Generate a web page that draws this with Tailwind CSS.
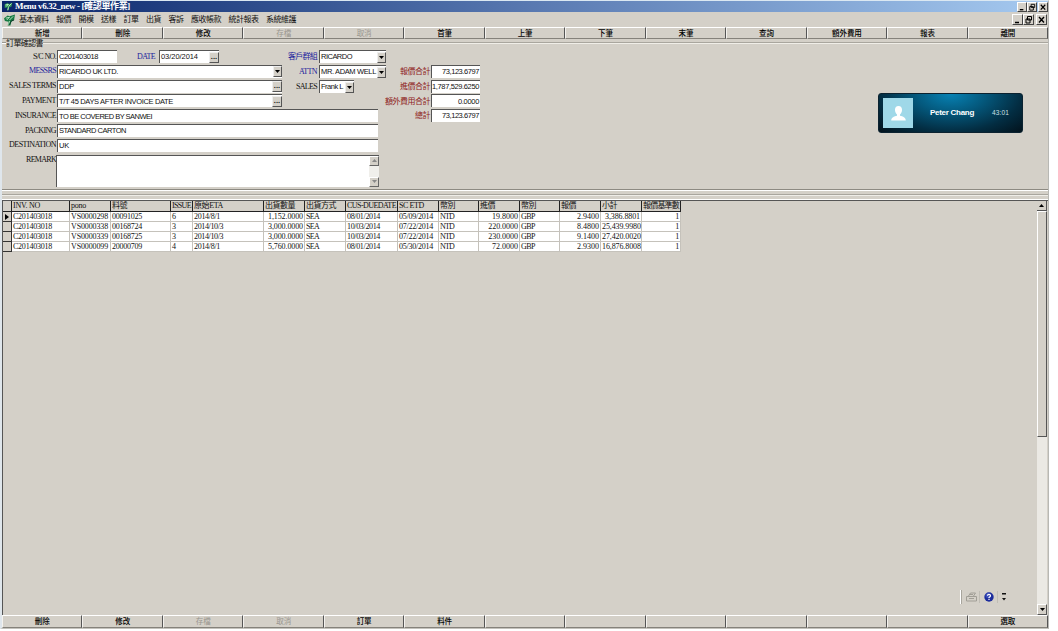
<!DOCTYPE html>
<html lang="zh-Hant">
<head>
<meta charset="utf-8">
<title>Menu v6.32_new</title>
<script src="https://cdn.jsdelivr.net/npm/@tailwindcss/browser@4"></script>
</head>
<body class="h-[631px] w-[1058px] overflow-hidden bg-white whitespace-nowrap text-[#111]">
<div class="flex h-[629px] w-[1049px] flex-col border-t border-r border-b border-l-2 border-t-[#dbe8f2] border-r-[#b8b8b4] border-b-[#c4c2bc] border-l-[#dfe6ec] bg-[#d4d0c8]">
  <header class="flex h-[11px] shrink-0 items-center bg-linear-to-r from-[#0a246a] via-[#5878b0] to-[#a6caf0] pl-[2px] font-['Liberation_Serif','Noto_Sans_CJK_TC',serif] text-[9px] leading-[11px] font-bold text-white">
    <svg class="mr-[2px] h-[9px] w-[9px]" viewBox="0 0 12 12"><path d="M1 3l4-2 1 2 5-2-1 5-3 1-1 4H4l1-4-4 1z" fill="#2f9a54"/><path d="M2 4l4-1-3 3M6 6l4-4M6 7l-1 4" stroke="#dff5df" fill="none"/></svg>
    <span data-w="115">Menu v6.32_new - [確認單作業]</span>
    <div class="ml-auto flex" id="winTop"></div>
  </header>
  <nav class="flex h-[15px] shrink-0 items-center pl-[2px] font-['Noto_Sans_CJK_TC',sans-serif] text-[8px] leading-[14px]">
    <svg class="mr-[4px] h-[12px] w-[11px] shrink-0" viewBox="0 0 12 12"><path d="M0 4l4-3 2 1 6-2-1 6-3 2-1 4H4l1-4-4-1z" fill="#167a43"/><path d="M2 4l4-1-3 3M6 6l4-4M6 7l-1 4" stroke="#c4ecc8" fill="none"/><path d="M6 11l2-4 3-1" stroke="#123a2a" fill="none"/></svg>
    <div class="flex gap-[7.5px] pb-px">
      <span data-w="29.500">基本資料</span><span data-w="15">報價</span><span data-w="15">開模</span><span data-w="15">送樣</span><span data-w="15">訂單</span><span data-w="15">出貨</span><span data-w="15">客訴</span><span data-w="30">應收帳款</span><span data-w="30">統計報表</span><span data-w="30">系統維護</span>
    </div>
    <div class="mr-px ml-auto flex" id="winDoc"></div>
  </nav>
  <div class="flex h-[12px] shrink-0" id="barTop"></div>

  <section class="flex h-[151px] shrink-0 flex-col">
    <div class="flex h-[7px] items-center">
      <i class="h-[2px] w-[4px] border-t border-b border-t-[#9b988f] border-b-white"></i>
      <span class="font-['Noto_Sans_CJK_TC',sans-serif] text-[8px] leading-[8px]" data-w="37">訂單確認書</span>
      <i class="h-[2px] flex-1 border-t border-b border-t-[#a9a69e] border-b-[#f0eee8]"></i>
    </div>
    <div class="flex flex-1 border-b border-[#8d8a82] pt-[3px]">
      <div class="w-[377px] font-['Liberation_Serif',serif] text-[8px]">
        <div class="flex h-[15px] items-center">
          <label class="mr-px w-[54px] text-right"><span data-w="23">S/C NO.</span></label>
          <div class="flex h-[13px] w-[60px] items-center border-t border-l border-[#555] bg-white pl-px font-['Liberation_Sans',sans-serif] text-[7.5px]"><span data-w="39">C201403018</span></div>
          <label class="mr-[4px] ml-auto text-[#22229c]"><span data-w="18">DATE</span></label>
          <div class="mr-[160px] flex h-[13px] w-[60px] items-center border-t border-l border-[#555] bg-white pl-px font-['Liberation_Sans',sans-serif] text-[7.5px]"><span data-w="37">03/20/2014</span><b class="ml-auto h-[11px] w-[10px] border border-t-[#eee] border-r-[#555] border-b-[#555] border-l-[#eee] bg-[#d4d0c8] text-center leading-[7px]">...</b></div>
        </div>
        <div id="leftRows"></div>
        <div class="flex h-[34px] pt-[2px]">
          <label class="w-[54px] text-right leading-[9px]"><span data-w="30">REMARK</span></label>
          <div class="flex h-[32px] flex-1 border-t border-l border-[#555] bg-white">
            <div class="ml-auto flex w-[10px] flex-col justify-between bg-[#f0efeb]">
              <i class="flex h-[10px] items-center justify-center border border-t-white border-r-[#666] border-b-[#666] border-l-white bg-[#d4d0c8]"><svg class="h-[3px] w-[5px]" viewBox="0 0 5 3"><path d="M0 3L2.5 0 5 3z" fill="#888"/></svg></i>
              <i class="flex h-[10px] items-center justify-center border border-t-white border-r-[#666] border-b-[#666] border-l-white bg-[#d4d0c8]"><svg class="h-[3px] w-[5px]" viewBox="0 0 5 3"><path d="M0 0h5L2.5 3z" fill="#888"/></svg></i>
            </div>
          </div>
        </div>
      </div>
      <div class="-ml-[94px] w-[101px] font-['Liberation_Serif','Noto_Sans_CJK_TC',serif] text-[8px]" id="midRows"></div>
      <div class="w-[94px] pt-[15px] font-['Noto_Sans_CJK_TC',sans-serif] text-[8px] text-[#8e1b1b]" id="sumRows"></div>
      <aside class="mt-[44px] ml-[398px] flex h-[40px] w-[145px] items-center rounded-[3px] border border-[#0b2230] bg-[radial-gradient(ellipse_at_50%_0%,#0782b4_0%,#04587c_35%,#032d42_70%,#02121c_100%)] pl-[4px] font-['Liberation_Sans',sans-serif] text-white">
        <div class="flex h-[30px] w-[30px] items-center justify-center bg-[#9fd8e8]"><svg class="h-[17px] w-[17px]" viewBox="0 0 17 17"><path d="M8.5 1C6 1 4.8 2.7 5 5.2c.2 2 1 3.400 2 4.200v1.300C4 11.500 1.500 12 1.200 15.500h14.600C15.500 12 13 11.500 10 10.700V9.400c1-.8 1.800-2.200 2-4.200C12.200 2.700 11 1 8.500 1z" fill="#fff"/></svg></div>
        <b class="ml-[17px] text-[8px]" data-w="44">Peter Chang</b>
        <span class="ml-[18px] text-[6.500px] text-[#cfe0e6]" data-w="17">43:01</span>
      </aside>
    </div>
  </section>

  <div class="h-[10px] shrink-0 border-t border-b border-t-white border-b-white pt-[3px]"><i class="block h-[2px] border-t border-b border-t-[#a9a69e] border-b-[#efede8]"></i></div>

  <main class="flex min-h-0 flex-1 border-t border-l border-[#555]">
    <div class="flex flex-1 flex-col justify-between">
      <div class="w-[680px] font-['Liberation_Serif','Noto_Sans_CJK_TC',serif] text-[8px]" id="grid"></div>
      <div class="mr-[30px] mb-[11px] flex h-[14px] items-center self-end">
        <i class="mr-[4px] h-[14px] w-[2px] border-r border-l border-r-[#a8a59d] border-l-white"></i>
        <svg class="h-[10px] w-[11px]" viewBox="0 0 11 10" fill="none" stroke="#a19e96"><path d="M.5 4.500h10v4.500H.5zM2.500 4l2-3h5l-2 3M3 6.500h5M4 2.500h3"/></svg>
        <i class="mr-[4px] ml-[2px] h-[12px] w-px bg-[#c0bdb5]"></i>
        <svg class="h-[10px] w-[10px]" viewBox="0 0 10 10"><circle cx="5" cy="5" r="4.700" fill="#1c2c9c"/><circle cx="4" cy="3.500" r="2.500" fill="#5065cf" opacity=".6"/><path d="M3.500 3.800q0-1.500 1.500-1.500t1.500 1.400Q6.500 4.500 5 5.500v.7M5 7v1" fill="none" stroke="#fff" stroke-width="1.200"/></svg>
        <i class="mr-[4px] ml-[3px] h-[12px] w-px bg-[#c0bdb5]"></i>
        <svg class="h-[8px] w-[5px]" viewBox="0 0 5 8"><path d="M0 0h4v1.500H0zM0 5h4L2 7.500z" fill="#111"/></svg>
      </div>
    </div>
    <div class="mr-px flex w-[10px] flex-col bg-[#ebe9e4]">
      <i class="flex h-[10px] items-center justify-center border-r border-b border-[#555] bg-[#d4d0c8]"><svg class="h-[3px] w-[5px]" viewBox="0 0 5 3"><path d="M0 3L2.500 0 5 3z"/></svg></i>
      <i class="h-[226px] border border-t-white border-r-[#555] border-b-[#555] border-l-white bg-[#d4d0c8]"></i>
      <i class="mt-auto flex h-[11px] items-center justify-center border border-t-white border-r-[#555] border-b-[#555] border-l-white bg-[#d4d0c8]"><svg class="h-[3px] w-[5px]" viewBox="0 0 5 3"><path d="M0 0h5L2.500 3z"/></svg></i>
    </div>
  </main>
  <div class="flex h-[13px] shrink-0" id="barBottom"></div>
</div>

<script>
const $ = id => document.getElementById(id);
const bar = (items, dim) => items.map(t => `<div class="flex h-full flex-1 items-center justify-center border-t border-r border-b border-l border-t-white border-r-[#555] border-b-[#85827b] border-l-[#f4f2ee] pb-[2px] font-['Noto_Sans_CJK_TC',sans-serif] text-[7.5px] leading-[9px] ${dim.includes(t) ? 'text-[#99968f]' : 'font-medium text-black'}">${t ? `<span data-w="${t.length * 7.4}">${t}</span>` : ''}</div>`).join('');
$('barTop').innerHTML = bar(['新增','刪除','修改','存檔','取消','首筆','上筆','下筆','末筆','查詢','額外費用','報表','離開'], ['存檔','取消']);
$('barBottom').innerHTML = bar(['刪除','修改','存檔','取消','訂單','料件','','','','','','','選取'], ['存檔','取消']);

const glyphs = ['<path d="M2 7.500h4" stroke-width="1.500"/>', '<path d="M3.500 1.500h4v3.500h-4zM2 4h4v4H2z"/>', '<path d="M2 2l5 5.500M7 2L2 7.500" stroke-width="1.400"/>'];
$('winTop').innerHTML = glyphs.map((g, i) => `<i class="${i == 2 ? 'ml-px ' : ''}flex h-[10px] w-[10px] border border-t-white border-r-[#444] border-b-[#444] border-l-white bg-[#d4d0c8]"><svg class="h-[8px] w-[8px]" viewBox="0 0 9 9" fill="none" stroke="#000">${g}</svg></i>`).join('');
$('winDoc').innerHTML = glyphs.map((g, i) => `<i class="${i == 2 ? 'ml-[2px] ' : ''}flex h-[11px] w-[11px] border border-t-white border-r-[#444] border-b-[#444] border-l-white bg-[#d4d0c8]"><svg class="h-[9px] w-[9px]" viewBox="0 0 9 9" fill="none" stroke="#000">${g}</svg></i>`).join('');

const dots = `<b class="ml-auto h-[11px] w-[10px] border border-t-[#eee] border-r-[#555] border-b-[#555] border-l-[#eee] bg-[#d4d0c8] text-center leading-[7px]">...</b>`;
const drop = `<i class="ml-auto flex h-[11px] w-[9px] shrink-0 items-center justify-center border border-t-[#eee] border-r-[#555] border-b-[#555] border-l-[#eee] bg-[#d4d0c8]"><svg class="h-[3px] w-[5px]" viewBox="0 0 5 3"><path d="M0 0h5L2.500 3z"/></svg></i>`;
$('leftRows').innerHTML = [
  ['MESSRS',27,'RICARDO UK LTD.',59,drop],['SALES TERMS',47,'DDP',15,dots],['PAYMENT',34,'T/T 45 DAYS AFTER INVOICE DATE',114,dots],
  ['INSURANCE',41,'TO BE COVERED BY SANWEI',93,''],['PACKING',31,'STANDARD CARTON',67,''],['DESTINATION',47,'UK',10,'']
].map(([l, lw, v, vw, btn], i) => `<div class="flex h-[14.8px] items-center"><label class="mr-px w-[54px] text-right ${i ? '' : 'text-[#22229c]'}"><span data-w="${lw}">${l}</span></label><div class="flex h-[13px] items-center border-t border-l border-[#555] bg-white pl-px font-['Liberation_Sans',sans-serif] text-[7.5px] ${btn ? 'w-[225px]' : 'w-[321px]'}"><span data-w="${vw}">${v}</span>${btn}</div></div>`).join('');

$('midRows').innerHTML = [['客戶群組',29,'RICARDO',31,'w-[67px]'],['ATTN',18,'MR. ADAM WELL',55,'w-[67px]'],['SALES',21,'Frank L',22,'w-[35px]']]
.map(([l, lw, v, vw, w], i) => `<div class="flex h-[15px] items-center"><label class="mr-[2px] w-[32px] text-right ${i < 2 ? 'text-[#22229c]' : ''}"><span data-w="${lw}">${l}</span></label><div class="flex h-[13px] items-center border-t border-l border-[#555] bg-white pl-px font-['Liberation_Sans',sans-serif] text-[7.5px] ${w}"><span data-w="${vw}">${v}</span>${drop}</div></div>`).join('');

$('sumRows').innerHTML = [['報價合計',30,'73,123.6797',37],['進價合計',30,'1,787,529.6250',47],['額外費用合計',45,'0.0000',21],['總計',15,'73,123.6797',37]]
.map(([l, lw, v, vw]) => `<div class="flex h-[14.7px] items-center justify-end"><span data-w="${lw}">${l}</span><div class="ml-[1px] flex h-[13px] w-[49px] shrink-0 items-center justify-end border-t border-l border-[#555] bg-white pr-[1px] font-['Liberation_Sans',sans-serif] text-[7.5px] text-[#111]"><span data-w="${vw}">${v}</span></div></div>`).join('');

const cols = [9,58,41,60,22,71,41,41,52,41,40,41,40,41,41,39];
const right = [6,11,13,14,15];
const heads = ['','INV. NO','pono','料號','ISSUE','原始ETA','出貨數量','出貨方式','CUS-DUEDATE','SC ETD','幣別','進價','幣別','報價','小計','報價基準數'];
const headW = [0,27,15,15,19,29,30,30,49,25,15,15,15,15,15,36];
const rows = [
  ['','C201403018','VS0000298','00091025','6','2014/8/1','1,152.0000','SEA','08/01/2014','05/09/2014','NTD','19.8000','GBP','2.9400','3,386.8801','1'],
  ['','C201403018','VS0000338','00168724','3','2014/10/3','3,000.0000','SEA','10/03/2014','07/22/2014','NTD','220.0000','GBP','8.4800','25,439.9980','1'],
  ['','C201403018','VS0000339','00168725','3','2014/10/3','3,000.0000','SEA','10/03/2014','07/22/2014','NTD','230.0000','GBP','9.1400','27,420.0020','1'],
  ['','C201403018','VS0000099','20000709','4','2014/8/1','5,760.0000','SEA','08/01/2014','05/30/2014','NTD','72.0000','GBP','2.9300','16,876.8008','1']];
const valW = {1:39, 2:37, 3:30, 7:13, 8:33, 9:34, 10:14, 12:14};
const valueWidth = (v, i) => i == 5 ? v.length * 3.25 : valW[i] || v.length * 3.85 - (v.includes(',') ? 2.5 : 0) - (v.includes('.') ? 1 : 0);
const tpl = cols.map(c => c + 'px').join(' ');
$('grid').innerHTML = `<div class="grid h-[11px]" style="grid-template-columns:${tpl}">` +
  heads.map((h, i) => `<div class="h-[11px] border-r border-b border-[#222] pl-px leading-[10px]"><span data-w="${headW[i]}">${h}</span></div>`).join('') + '</div>' +
  rows.map((r, n) => `<div class="grid h-[10px]" style="grid-template-columns:${tpl}">` + r.map((v, i) => i == 0
    ? `<div class="flex h-[10px] items-center justify-center border-r border-b border-[#333]">${n ? '' : '<svg class="h-[6px] w-[4px]" viewBox="0 0 4 6"><path d="M0 0l4 3-4 3z"/></svg>'}</div>`
    : `<div class="h-[10px] border-r border-b border-[#c5c2bb] bg-white px-px leading-[9px] ${right.includes(i) ? 'text-right' : ''}"><span data-w="${valueWidth(v, i)}">${v}</span></div>`).join('') + '</div>').join('');

function fit() {
  const all = [...document.querySelectorAll('[data-w]')].filter(e => e.textContent);
  all.forEach(e => { e.style.letterSpacing = '0px'; });
  if (parseFloat(getComputedStyle(all[0]).fontSize) > 12) return;
  const widths = all.map(e => { const r = document.createRange(); r.selectNodeContents(e); return r.getBoundingClientRect().width; });
  all.forEach((e, i) => { e.style.letterSpacing = ((e.dataset.w - widths[i]) / e.textContent.length).toFixed(3) + 'px'; });
}
fit();
addEventListener('load', fit);
document.fonts.ready.then(fit);
let frames = 0;
(function again() { fit(); if (frames++ < 20) requestAnimationFrame(again); })();
</script>
</body>
</html>
